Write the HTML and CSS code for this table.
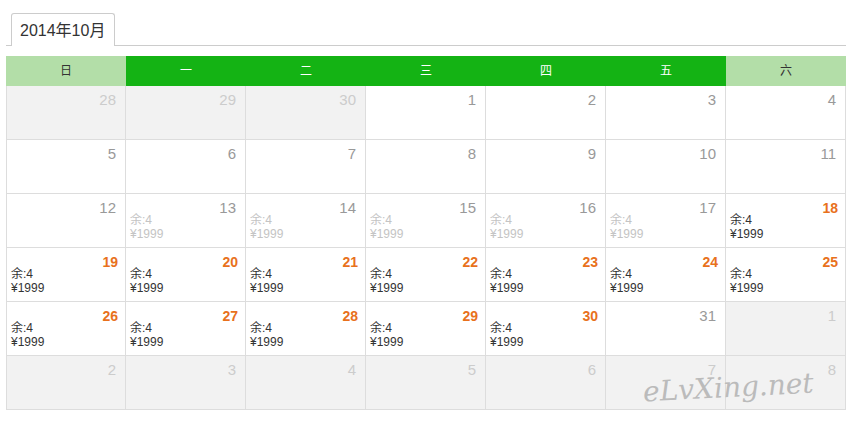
FILE: index.html
```html
<!DOCTYPE html>
<html lang="zh-CN">
<head>
    <meta charset="UTF-8">
    <title>2014年10月</title>
    <link rel="stylesheet" href="styles.css">
</head>
<body>
    <!-- Month tabs -->
    <div class="tabs">
        <div class="tab">2014年10月</div>
    </div>

    <div class="calendar">
        <div class="weekHead">
            <div class="weekend">日</div>
            <div>一</div>
            <div>二</div>
            <div>三</div>
            <div>四</div>
            <div>五</div>
            <div class="weekend">六</div>
        </div>

        <div class="days">
            <!-- row 1 -->
            <div class="day off"><span class="num">28</span></div>
            <div class="day off"><span class="num">29</span></div>
            <div class="day off"><span class="num">30</span></div>
            <div class="day"><span class="num">1</span></div>
            <div class="day"><span class="num">2</span></div>
            <div class="day"><span class="num">3</span></div>
            <div class="day"><span class="num">4</span></div>
            <!-- row 2 -->
            <div class="day"><span class="num">5</span></div>
            <div class="day"><span class="num">6</span></div>
            <div class="day"><span class="num">7</span></div>
            <div class="day"><span class="num">8</span></div>
            <div class="day"><span class="num">9</span></div>
            <div class="day"><span class="num">10</span></div>
            <div class="day"><span class="num">11</span></div>
            <!-- row 3 -->
            <div class="day"><span class="num">12</span></div>
            <div class="day closed"><span class="num">13</span><p>余:4</p><p>¥1999</p></div>
            <div class="day closed"><span class="num">14</span><p>余:4</p><p>¥1999</p></div>
            <div class="day closed"><span class="num">15</span><p>余:4</p><p>¥1999</p></div>
            <div class="day closed"><span class="num">16</span><p>余:4</p><p>¥1999</p></div>
            <div class="day closed"><span class="num">17</span><p>余:4</p><p>¥1999</p></div>
            <div class="day open"><span class="num">18</span><p>余:4</p><p>¥1999</p></div>
            <!-- row 4 -->
            <div class="day open"><span class="num">19</span><p>余:4</p><p>¥1999</p></div>
            <div class="day open"><span class="num">20</span><p>余:4</p><p>¥1999</p></div>
            <div class="day open"><span class="num">21</span><p>余:4</p><p>¥1999</p></div>
            <div class="day open"><span class="num">22</span><p>余:4</p><p>¥1999</p></div>
            <div class="day open"><span class="num">23</span><p>余:4</p><p>¥1999</p></div>
            <div class="day open"><span class="num">24</span><p>余:4</p><p>¥1999</p></div>
            <div class="day open"><span class="num">25</span><p>余:4</p><p>¥1999</p></div>
            <!-- row 5 -->
            <div class="day open"><span class="num">26</span><p>余:4</p><p>¥1999</p></div>
            <div class="day open"><span class="num">27</span><p>余:4</p><p>¥1999</p></div>
            <div class="day open"><span class="num">28</span><p>余:4</p><p>¥1999</p></div>
            <div class="day open"><span class="num">29</span><p>余:4</p><p>¥1999</p></div>
            <div class="day open"><span class="num">30</span><p>余:4</p><p>¥1999</p></div>
            <div class="day"><span class="num">31</span></div>
            <div class="day off"><span class="num">1</span></div>
            <!-- row 6 -->
            <div class="day off"><span class="num">2</span></div>
            <div class="day off"><span class="num">3</span></div>
            <div class="day off"><span class="num">4</span></div>
            <div class="day off"><span class="num">5</span></div>
            <div class="day off"><span class="num">6</span></div>
            <div class="day off"><span class="num">7</span></div>
            <div class="day off"><span class="num">8</span></div>
        </div>

        <!-- watermark -->
        <div class="watermark">eLvXing.net</div>
    </div>
</body>
</html>
```

FILE: styles.css
```css
body {
    margin: 0;
    padding: 13px 10px 0 6px;
    font-family: "Liberation Sans", "Noto Sans CJK SC", sans-serif;
    color: #333;
    background: #fff;
}

.tabs {
    display: flex;
    width: 840px;
    padding-left: 5px;
    box-sizing: border-box;
    border-bottom: 1px solid #ccc;
}

.tab {
    height: 32px;
    line-height: 34px;
    padding: 0 9px 0 8px;
    margin-bottom: -1px;
    font-size: 16px;
    color: #333;
    background: #fff;
    border: 1px solid #ccc;
    border-bottom: none;
    border-radius: 3px 3px 0 0;
}

.calendar {
    position: relative;
    width: 840px;
    margin-top: 10px;
}

.weekHead {
    display: grid;
    grid-template-columns: repeat(7, 120px);
    height: 30px;
    line-height: 30px;
    text-align: center;
    font-size: 12px;
    background-color: #14b314;
    color: #fff;
}

.weekHead .weekend {
    background-color: #b3dea8;
    color: #333;
}

.days {
    display: grid;
    grid-template-columns: 119px repeat(6, 120px);
    grid-auto-rows: 54px;
    border-left: 1px solid #ddd;
}

.day {
    box-sizing: border-box;
    border-right: 1px solid #ddd;
    border-bottom: 1px solid #ddd;
    padding: 9px 9px 0 4px;
    background: #fff;
}

.day .num {
    display: block;
    height: 10px;
    line-height: 10px;
    text-align: right;
    font-size: 15px;
    color: #999;
}

.day p {
    margin: 0;
    font-size: 12px;
    line-height: 14px;
    color: #333;
}

.day.closed p {
    color: #c4c4c4;
}

.day.off {
    background: #f2f2f2;
}

.day.off .num {
    color: #ccc;
}

.day.open .num {
    color: #e8711c;
    font-weight: bold;
    font-size: 14px;
    margin-right: -2px;
}

.watermark {
    position: absolute;
    right: 32px;
    bottom: 6px;
    font-family: "DejaVu Serif", serif;
    font-style: italic;
    font-size: 28px;
    color: #bbb;
    transform: rotate(-3deg);
    pointer-events: none;
}
```
